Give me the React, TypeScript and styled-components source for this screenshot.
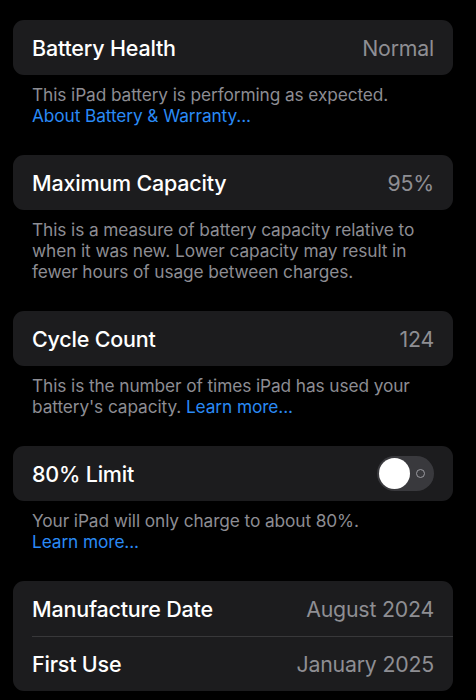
import React from "react";
import styled, { createGlobalStyle } from "styled-components";

const Global = createGlobalStyle`
  html, body { margin: 0; padding: 0; background: #000; }
  body { font-family: Inter, "Noto Sans", sans-serif; -webkit-font-smoothing: antialiased; }
`;

const Page = styled.div`
  background: #000;
  min-height: 700px;
  padding: 20px 23px 0 13px;
  box-sizing: border-box;
  display: flex;
  flex-direction: column;
`;

const Section = styled.section`
  display: flex;
  flex-direction: column;
  margin-bottom: 29px;
`;

const Card = styled.div`
  background: #1c1c1e;
  border-radius: 11px;
  display: flex;
  flex-direction: column;
`;

const Row = styled.div<{ $divider?: boolean }>`
  height: 55px;
  display: flex;
  align-items: center;
  justify-content: space-between;
  padding: 0 19px;
  margin-left: ${(p) => (p.$divider ? "19px" : "0")};
  padding-left: ${(p) => (p.$divider ? "0" : "19px")};
  border-top: ${(p) => (p.$divider ? "1px solid #38383a" : "none")};
  box-sizing: border-box;
`;

const Label = styled.span`
  color: #fff;
  font-size: 21.5px;
  font-weight: 500;
  letter-spacing: -0.2px;
`;

const Value = styled.span`
  color: #8e8e93;
  font-size: 21.3px;
  font-weight: 400;
  letter-spacing: -0.2px;
`;

const Footer = styled.p`
  margin: 0;
  padding: 9px 19px 0;
  color: #8d8d93;
  font-size: 17.3px;
  line-height: 21px;
  letter-spacing: -0.1px;
`;

const Link = styled.span`
  color: #2a8af5;
`;

const Track = styled.div`
  width: 57px;
  height: 35px;
  border-radius: 18px;
  background: #39393d;
  display: flex;
  align-items: center;
  padding: 2px;
  box-sizing: border-box;
  gap: 6px;
`;

const Knob = styled.div`
  width: 31px;
  height: 31px;
  border-radius: 50%;
  background: #fff;
`;

const OffMark = styled.div`
  width: 7px;
  height: 7px;
  border-radius: 50%;
  border: 1.5px solid #9a9aa0;
`;

export default function App() {
  return (
    <>
      <Global />
      <Page>
        <Section>
          <Card>
            <Row>
              <Label>Battery Health</Label>
              <Value>Normal</Value>
            </Row>
          </Card>
          <Footer>
            This iPad battery is performing as expected.
            <br />
            <Link>About Battery &amp; Warranty...</Link>
          </Footer>
        </Section>
        <Section>
          <Card>
            <Row>
              <Label>Maximum Capacity</Label>
              <Value>95%</Value>
            </Row>
          </Card>
          <Footer>
            This is a measure of battery capacity relative to when it was new. Lower capacity may result in fewer hours of usage between charges.
          </Footer>
        </Section>
        <Section>
          <Card>
            <Row>
              <Label>Cycle Count</Label>
              <Value>124</Value>
            </Row>
          </Card>
          <Footer>
            This is the number of times iPad has used your battery's capacity. <Link>Learn more...</Link>
          </Footer>
        </Section>
        <Section>
          <Card>
            <Row>
              <Label>80% Limit</Label>
              <Track>
                <Knob />
                <OffMark />
              </Track>
            </Row>
          </Card>
          <Footer>
            Your iPad will only charge to about 80%.
            <br />
            <Link>Learn more...</Link>
          </Footer>
        </Section>
        <Section>
          <Card>
            <Row>
              <Label>Manufacture Date</Label>
              <Value>August 2024</Value>
            </Row>
            <Row $divider>
              <Label>First Use</Label>
              <Value>January 2025</Value>
            </Row>
          </Card>
        </Section>
      </Page>
    </>
  );
}
